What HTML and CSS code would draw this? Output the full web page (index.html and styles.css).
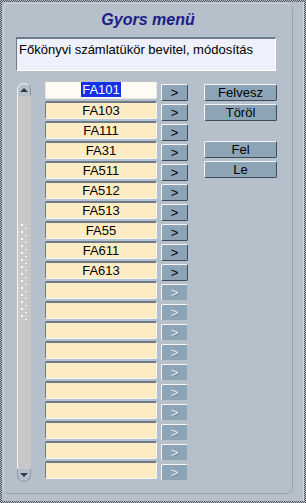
FILE: index.html
```html
<!DOCTYPE html>
<html lang="hu">
<head>
  <meta charset="UTF-8" />
  <meta name="viewport" content="width=device-width, initial-scale=1" />
  <title>Gyors menü</title>
  <link rel="stylesheet" href="styles.css">
</head>
<body>
  <div class="frame">
    <div class="panel">
      <h1>Gyors menü</h1>
      <div class="desc">Főkönyvi számlatükör bevitel, módosítás</div>

      <div class="main">
        <div class="scroll">
          <div class="scroll-up"><span class="tri-up"></span></div>
          <div class="scroll-track">
            <div class="grip"></div>
          </div>
          <div class="scroll-down"><span class="tri-down"></span></div>
        </div>

        <div class="list" id="list"></div>

        <div class="side">
          <button class="side-btn">Felvesz</button>
          <button class="side-btn">Töröl</button>
          <button class="side-btn gap">Fel</button>
          <button class="side-btn">Le</button>
        </div>
      </div>
    </div>
  </div>

  <script>
    const codes = ['FA101', 'FA103', 'FA111', 'FA31', 'FA511', 'FA512', 'FA513', 'FA55', 'FA611', 'FA613'];
    const ROWS = 20;

    const list = document.getElementById('list');
    for (let i = 0; i < ROWS; i++) {
      const code = codes[i] || '';
      const row = document.createElement('div');
      row.className = 'row';

      const field = document.createElement('div');
      field.className = 'field' + (i === 0 ? ' active' : '');
      field.innerHTML = i === 0 ? `<span class="sel">${code}</span>` : code;

      const go = document.createElement('button');
      go.className = 'go' + (code ? '' : ' off');
      go.textContent = '>';

      row.appendChild(field);
      row.appendChild(go);
      list.appendChild(row);
    }
  </script>
</body>
</html>
```

FILE: styles.css
```css
body {
  margin: 0;
  font-family: 'Liberation Sans', Arial, sans-serif;
}
.frame {
  width: 306px;
  height: 503px;
  box-sizing: border-box;
  padding: 2px;
  background: repeating-conic-gradient(#4a4e56 0 25%, #b8c0c8 0 50%) 0 0 / 2px 2px;
}
.panel {
  height: 100%;
  box-sizing: border-box;
  background: #b6c0ca;
  border-right: 1px solid #d2d8de;
  padding: 1px 10px 8px 1px;
  position: relative;
}
.panel::before {
  content: '';
  position: absolute;
  left: 1px;
  top: 1px;
  right: 10px;
  bottom: 7px;
  border: 1px solid #98a6b6;
  border-top-color: #cad2da;
  border-left-color: #cad2da;
  border-radius: 6px;
  pointer-events: none;
}
h1 {
  margin: 7px 0 0;
  height: 20px;
  line-height: 20px;
  text-align: center;
  font-size: 16px;
  font-style: italic;
  font-weight: bold;
  color: #1c1c8a;
}
.desc {
  margin: 7px 0 0 13px;
  width: 260px;
  height: 34px;
  box-sizing: border-box;
  padding: 3px 2px;
  font-size: 13px;
  color: #000;
  background: #eef0fb;
  border: 1px solid #fff;
  border-top: 2px solid #6c7a8a;
  border-left: 1px solid #6c7a8a;
}
.main {
  display: flex;
  margin-top: 10px;
  margin-left: 14px;
}
.scroll {
  width: 14px;
  height: 399px;
  margin-top: 2px;
  display: flex;
  flex-direction: column;
}
.scroll-up,
.scroll-down {
  height: 13px;
  box-sizing: border-box;
  background: #b6c0ca;
  border: 1px solid #8a98a8;
  display: flex;
  justify-content: center;
  align-items: center;
}
.scroll-up {
  border-radius: 7px 7px 0 0;
  border-bottom: none;
  border-top-color: #eef2f6;
  border-left-color: #eef2f6;
}
.scroll-down {
  border-radius: 0 0 7px 7px;
  border-top: none;
}
.tri-up {
  border: 4px solid transparent;
  border-top: none;
  border-bottom: 4px solid #2e3a4a;
}
.tri-down {
  border: 4px solid transparent;
  border-bottom: none;
  border-top: 4px solid #2e3a4a;
}
.scroll-track {
  flex: 1;
  background: #c8c8c8;
  border-left: 1px solid #f4f4f4;
  position: relative;
}
.grip {
  position: absolute;
  left: 3px;
  top: 128px;
  width: 7px;
  height: 96px;
  background:
    radial-gradient(circle at 1px 1px, #fafafa 0.9px, transparent 1.1px) 0 0 / 7px 7px,
    radial-gradient(circle at 5px 4.5px, #fafafa 0.9px, transparent 1.1px) 0 0 / 7px 7px;
}
.list {
  margin-left: 14px;
  display: flex;
  flex-direction: column;
  gap: 2px;
}
.row {
  display: flex;
  align-items: flex-start;
  gap: 4px;
  height: 18px;
}
.field {
  width: 112px;
  height: 18px;
  box-sizing: border-box;
  background: #fdebc3;
  border: 1px solid #f6f6f6;
  border-top: 2px solid #6e7a88;
  border-left: 1px solid #6e7a88;
  border-radius: 2px;
  text-align: center;
  font-size: 13px;
  line-height: 15px;
  color: #000;
}
.field.active {
  background: #fdfbf2;
  border-color: #e8e8e8;
  border-top: 1px solid #c0c4c8;
}
.sel {
  background: #1430e8;
  color: #fff;
  padding: 0 1px;
}
.go {
  width: 27px;
  height: 17px;
  margin-top: 3px;
  padding: 0;
  font-family: 'Liberation Sans', Arial, sans-serif;
  font-size: 13px;
  line-height: 14px;
  color: #000;
  background: #8ca4b6;
  border: 1px solid #3e4c5a;
  border-top-color: #f4f6f8;
  border-left-color: #f4f6f8;
  border-radius: 2px;
}
.go.off {
  color: #e6edf2;
  text-shadow: 1px 1px 0 #6f8597;
  border-color: #b6c0ca;
  border-top-color: #f4f6f8;
  border-left-color: #f4f6f8;
}
.side {
  margin-left: 16px;
  display: flex;
  flex-direction: column;
  gap: 3px;
  padding-top: 3px;
}
.side-btn {
  width: 73px;
  height: 17px;
  padding: 0;
  font-family: 'Liberation Sans', Arial, sans-serif;
  font-size: 13px;
  line-height: 14px;
  color: #000;
  background: #8ca4b6;
  border: 1px solid #3e4c5a;
  border-top-color: #f4f6f8;
  border-left-color: #f4f6f8;
  border-radius: 2px;
}
.side-btn.gap {
  margin-top: 17px;
}
```
